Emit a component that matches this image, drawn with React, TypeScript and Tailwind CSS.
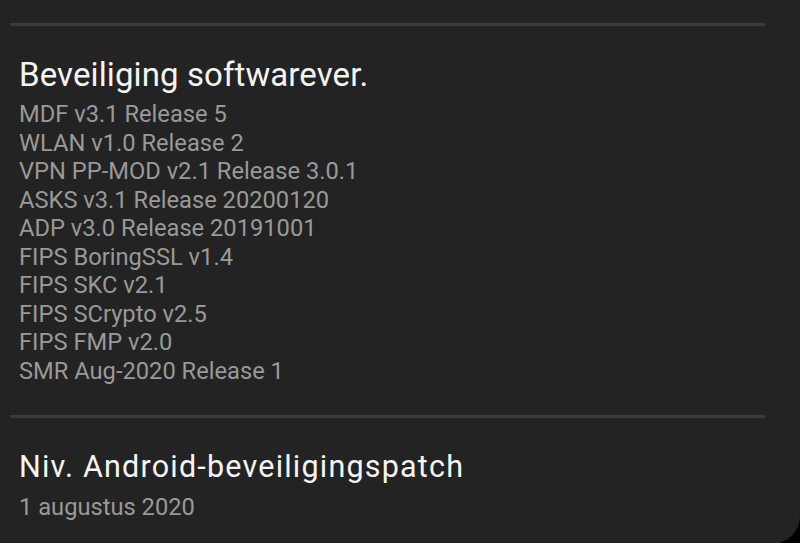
import React from 'react';

const versions = [
  'MDF v3.1 Release 5',
  'WLAN v1.0 Release 2',
  'VPN PP-MOD v2.1 Release 3.0.1',
  'ASKS v3.1 Release 20200120',
  'ADP v3.0 Release 20191001',
  'FIPS BoringSSL v1.4',
  'FIPS SKC v2.1',
  'FIPS SCrypto v2.5',
  'FIPS FMP v2.0',
  'SMR Aug-2020 Release 1',
];

export default function App() {
  return (
    <div className="w-[800px] h-[543px] bg-black overflow-hidden" style={{ fontFamily: 'Roboto, "Noto Sans", sans-serif' }}>
      <div className="h-[544px] bg-[#232323] rounded-br-[28px] pt-[23px] pl-[10px]">
        <div className="h-[3px] w-[755px] bg-[#3a3a3a]" />

        <div className="pl-[9px] pt-[30px]">
          <h2 className="text-[33px] leading-[38px] tracking-[0.1px] text-[#f4f4f4]">Beveiliging softwarever.</h2>
          <ul className="pt-[6px] text-[23.7px] leading-[28.5px] text-[#999999]">
            {versions.map((v) => (
              <li key={v}>{v}</li>
            ))}
          </ul>
        </div>

        <div className="mt-[30px] h-[3px] w-[755px] bg-[#3a3a3a]" />

        <div className="pl-[9px] pt-[32px]">
          <h2 className="text-[30.5px] leading-[34px] tracking-[1.2px] text-[#f4f4f4]">Niv. Android-beveiligingspatch</h2>
          <p className="pt-[9px] text-[23.7px] leading-[28.5px] text-[#999999]">1 augustus 2020</p>
        </div>
      </div>
    </div>
  );
}
